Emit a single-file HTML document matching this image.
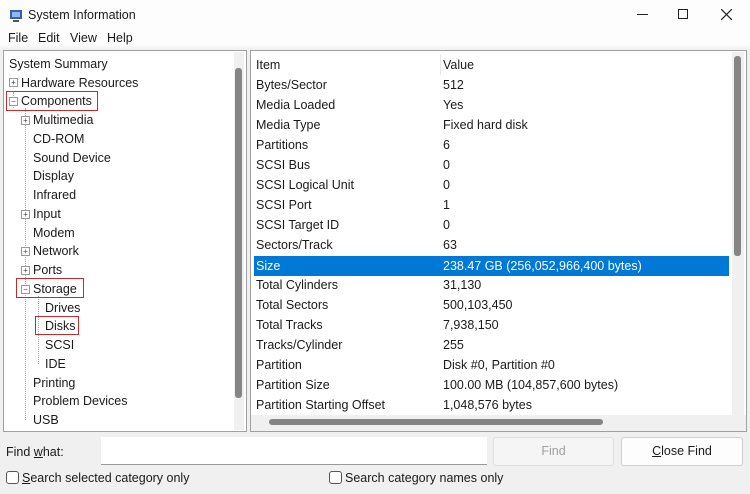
<!DOCTYPE html>
<html><head><style>
*{margin:0;padding:0;box-sizing:border-box}
body{width:750px;height:494px;background:#f0f0f0;font-family:"Liberation Sans",sans-serif;font-size:12.5px;color:#1a1a1a;position:relative;overflow:hidden}
.abs{position:absolute;white-space:nowrap}
.title{left:0;top:0;width:750px;height:46px;background:#fdfdfd}
.menu{top:31px}
.panel{background:#fff;border:1px solid #a0a0a0}
.tl{position:absolute;white-space:nowrap;line-height:16px}
.row{position:absolute;left:0;width:480px;height:20px;line-height:20px}
.row span{position:absolute}
.box{position:absolute;border:1.5px solid #c42b2b}
.pm{position:absolute;width:9px;height:9px;border:1px solid #999;background:#fff;font-size:8px;line-height:7px;text-align:center;color:#444}
.vl{position:absolute;border-left:1px dotted #aaa}
</style></head><body>
<div class="abs title"></div>
<div class="abs" style="left:0;top:46px;width:750px;height:4px;background:linear-gradient(#f8f8f8,#f0f0f0)"></div>
<svg class="abs" style="left:8px;top:7px" width="16" height="16"><rect x="2" y="3" width="12" height="9" fill="#3a5fb0"/><rect x="4" y="5" width="8" height="5" fill="#8fb8f0"/><rect x="5" y="13" width="6" height="2" fill="#555"/></svg>
<div class="abs" style="left:28px;top:8px">System Information</div>
<div class="abs" style="left:637px;top:14px;width:11px;border-top:1px solid #222"></div>
<div class="abs" style="left:678px;top:9px;width:10px;height:10px;border:1px solid #222"></div>
<svg class="abs" style="left:721px;top:9px" width="11" height="11"><path d="M0 0L11 11M11 0L0 11" stroke="#222" stroke-width="1.2"/></svg>
<div class="abs menu" style="left:8px">File</div>
<div class="abs menu" style="left:38px">Edit</div>
<div class="abs menu" style="left:70px">View</div>
<div class="abs menu" style="left:107px">Help</div>

<div class="abs panel" style="left:3px;top:50px;width:244px;height:382px"></div>
<div class="abs" style="left:234px;top:52px;width:10px;height:378px;background:#f0f0f0"></div>
<div class="abs" style="left:235px;top:68px;width:7px;height:330px;background:#858585;border-radius:3px"></div>

<div class="vl" style="left:13px;top:92px;height:16px"></div>
<div class="vl" style="left:25px;top:108px;height:312px"></div>
<div class="vl" style="left:38px;top:296px;height:68px"></div>
<div class="tl" style="left:9px;top:56px">System Summary</div>
<div class="pm" style="left:9px;top:78px">+</div><div class="tl" style="left:21px;top:75px">Hardware Resources</div>
<div class="pm" style="left:9px;top:97px">−</div><div class="tl" style="left:21px;top:93px">Components</div>
<div class="box" style="left:6px;top:91px;width:92px;height:20px"></div>
<div class="pm" style="left:21px;top:116px">+</div><div class="tl" style="left:33px;top:112px">Multimedia</div>
<div class="tl" style="left:33px;top:131px">CD-ROM</div>
<div class="tl" style="left:33px;top:150px">Sound Device</div>
<div class="tl" style="left:33px;top:168px">Display</div>
<div class="tl" style="left:33px;top:187px">Infrared</div>
<div class="pm" style="left:21px;top:210px">+</div><div class="tl" style="left:33px;top:206px">Input</div>
<div class="tl" style="left:33px;top:225px">Modem</div>
<div class="pm" style="left:21px;top:247px">+</div><div class="tl" style="left:33px;top:243px">Network</div>
<div class="pm" style="left:21px;top:266px">+</div><div class="tl" style="left:33px;top:262px">Ports</div>
<div class="pm" style="left:21px;top:285px">−</div><div class="tl" style="left:33px;top:281px">Storage</div>
<div class="box" style="left:16px;top:278px;width:68px;height:20px"></div>
<div class="tl" style="left:45px;top:300px">Drives</div>
<div class="tl" style="left:45px;top:318px">Disks</div>
<div class="box" style="left:35px;top:316px;width:44px;height:19px"></div>
<div class="tl" style="left:45px;top:337px">SCSI</div>
<div class="tl" style="left:45px;top:356px">IDE</div>
<div class="tl" style="left:33px;top:375px">Printing</div>
<div class="tl" style="left:33px;top:393px">Problem Devices</div>
<div class="tl" style="left:33px;top:412px">USB</div>

<div class="abs panel" style="left:250px;top:50px;width:497px;height:382px;overflow:hidden">
<div class="row" style="top:4px"><span style="left:5px">Item</span><span style="left:192px">Value</span></div>
<div style="position:absolute;left:189px;top:4px;height:20px;border-left:1px solid #e5e5e5"></div>
<div class="row" style="top:24px"><span style="left:5px">Bytes/Sector</span><span style="left:192px">512</span></div>
<div class="row" style="top:44px"><span style="left:5px">Media Loaded</span><span style="left:192px">Yes</span></div>
<div class="row" style="top:64px"><span style="left:5px">Media Type</span><span style="left:192px">Fixed hard disk</span></div>
<div class="row" style="top:84px"><span style="left:5px">Partitions</span><span style="left:192px">6</span></div>
<div class="row" style="top:104px"><span style="left:5px">SCSI Bus</span><span style="left:192px">0</span></div>
<div class="row" style="top:124px"><span style="left:5px">SCSI Logical Unit</span><span style="left:192px">0</span></div>
<div class="row" style="top:144px"><span style="left:5px">SCSI Port</span><span style="left:192px">1</span></div>
<div class="row" style="top:164px"><span style="left:5px">SCSI Target ID</span><span style="left:192px">0</span></div>
<div class="row" style="top:184px"><span style="left:5px">Sectors/Track</span><span style="left:192px">63</span></div>
<div class="row" style="top:205px;left:3px;width:475px;background:#0078d7;color:#fff"><span style="left:2px">Size</span><span style="left:189px">238.47 GB (256,052,966,400 bytes)</span></div>
<div class="row" style="top:224px"><span style="left:5px">Total Cylinders</span><span style="left:192px">31,130</span></div>
<div class="row" style="top:244px"><span style="left:5px">Total Sectors</span><span style="left:192px">500,103,450</span></div>
<div class="row" style="top:264px"><span style="left:5px">Total Tracks</span><span style="left:192px">7,938,150</span></div>
<div class="row" style="top:284px"><span style="left:5px">Tracks/Cylinder</span><span style="left:192px">255</span></div>
<div class="row" style="top:304px"><span style="left:5px">Partition</span><span style="left:192px">Disk #0, Partition #0</span></div>
<div class="row" style="top:324px"><span style="left:5px">Partition Size</span><span style="left:192px">100.00 MB (104,857,600 bytes)</span></div>
<div class="row" style="top:344px"><span style="left:5px">Partition Starting Offset</span><span style="left:192px">1,048,576 bytes</span></div>
<div style="position:absolute;left:481px;top:1px;width:12px;height:380px;background:#f0f0f0"></div>
<div style="position:absolute;left:483px;top:5px;width:7px;height:200px;background:#858585;border-radius:3px"></div>
<div style="position:absolute;left:0;top:364px;width:497px;height:16px;background:#f0f0f0"></div>
<div style="position:absolute;left:18px;top:368px;width:334px;height:6px;background:#858585;border-radius:3px"></div>
</div>

<div class="abs" style="left:6px;top:445px">Find <u>w</u>hat:</div>
<div class="abs" style="left:101px;top:437px;width:386px;height:28px;background:#fff;border-bottom:1px solid #999"></div>
<div class="abs" style="left:493px;top:437px;width:121px;height:29px;background:#f5f5f5;border:1px solid #e0e0e0;border-radius:3px;text-align:center;line-height:27px;color:#a0a0a0">Find</div>
<div class="abs" style="left:621px;top:437px;width:122px;height:29px;background:#fdfdfd;border:1px solid #d0d0d0;border-radius:3px;text-align:center;line-height:27px"><u>C</u>lose Find</div>
<div class="abs" style="left:6px;top:471px;width:13px;height:13px;border:1px solid #555;border-radius:3px;background:#fff"></div>
<div class="abs" style="left:22px;top:471px"><u>S</u>earch selected category only</div>
<div class="abs" style="left:329px;top:471px;width:13px;height:13px;border:1px solid #555;border-radius:3px;background:#fff"></div>
<div class="abs" style="left:345px;top:471px">Search category names only</div>
</body></html>
